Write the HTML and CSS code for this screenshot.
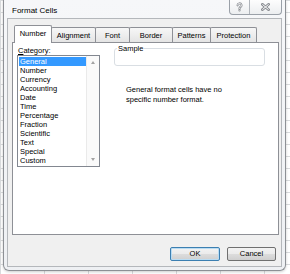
FILE: index.html
```html
<!DOCTYPE html>
<html lang="en">
<head>
    <meta charset="UTF-8">
    <meta name="viewport" content="width=device-width, initial-scale=1.0">
    <title>Format Cells</title>
    <link rel="stylesheet" href="styles.css">
</head>
<body>
    <div class="window">
        <div class="titlebar">
            <span class="title">Format Cells</span>
            <div class="caption-btns">
                <span class="cap help">
                    <svg width="7" height="10" viewBox="0 0 8 11">
                        <path d="M1.8 3.6 a2.2 2.2 0 1 1 3.3 1.9 q-1.1 0.7 -1.1 1.8 v0.5" fill="none" stroke="#8a8d92" stroke-width="2.4" stroke-linecap="round"/>
                        <circle cx="4" cy="9.4" r="1.2" fill="#8a8d92"/>
                        <path d="M1.8 3.6 a2.2 2.2 0 1 1 3.3 1.9 q-1.1 0.7 -1.1 1.8 v0.5" fill="none" stroke="#fff" stroke-width="0.9"/>
                        <circle cx="4" cy="9.4" r="0.5" fill="#fff"/>
                    </svg>
                </span>
                <span class="cap close">
                    <svg width="9" height="8" viewBox="0 0 10 9">
                        <path d="M1.5 1.5 L8.5 7.5 M8.5 1.5 L1.5 7.5" stroke="#8a8d92" stroke-width="3" stroke-linecap="square"/>
                        <path d="M1.5 1.5 L8.5 7.5 M8.5 1.5 L1.5 7.5" stroke="#fff" stroke-width="1.1"/>
                    </svg>
                </span>
            </div>
        </div>

        <div class="client">
            <!-- tab strip, first tab is the active one -->
            <div class="tabs">
                <span class="tab active">Number</span>
                <span class="tab">Alignment</span>
                <span class="tab">Font</span>
                <span class="tab">Border</span>
                <span class="tab">Patterns</span>
                <span class="tab">Protection</span>
            </div>

            <div class="panel">
                <div class="category">
                    <div class="field-label"><u>C</u>ategory:</div>
                    <div class="listbox">
                        <ul class="items">
                            <li class="selected">General</li>
                            <li>Number</li>
                            <li>Currency</li>
                            <li>Accounting</li>
                            <li>Date</li>
                            <li>Time</li>
                            <li>Percentage</li>
                            <li>Fraction</li>
                            <li>Scientific</li>
                            <li>Text</li>
                            <li>Special</li>
                            <li>Custom</li>
                        </ul>
                        <div class="scrollbar">
                            <span class="arrow up"></span>
                            <span class="arrow down"></span>
                        </div>
                    </div>
                </div>

                <div class="details">
                    <fieldset class="sample">
                        <legend>Sample</legend>
                    </fieldset>
                    <p class="desc">General format cells have no<br>specific number format.</p>
                </div>
            </div>

            <div class="buttons">
                <button class="btn default">OK</button>
                <button class="btn">Cancel</button>
            </div>
        </div>
    </div>
</body>
</html>
```

FILE: styles.css
```css
    *, *::before, *::after {
    box-sizing: border-box;
    }

    html, body {
    height: 100%;
    }

    /* the spreadsheet grid peeking out behind the dialog */
    body {
    margin: 0;
    background-color: #fff;
    background-image:
        linear-gradient(to right, #d9dbdd 1px, transparent 1px),
        linear-gradient(to bottom, #d9dbdd 1px, transparent 1px);
    background-size: 44px 100%, 100% 12px;
    font: 7.5px/9px 'Liberation Sans', Arial, sans-serif;
    color: #000;
    overflow: hidden;
    }

    .window {
    display: flex;
    flex-direction: column;
    width: 283px;
    height: 271px;
    margin-left: 3px;
    padding: 0 3px 3px;
    border: 1px solid #8d9095;
    border-top: none;
    border-radius: 0 0 6px 6px;
    background: linear-gradient(#f6f7f9, #eef0f3);
    box-shadow: 0 1px 3px #0003;
    }

    .titlebar {
    display: flex;
    justify-content: space-between;
    align-items: flex-start;
    height: 18px;
    }

    .title {
    margin: 6px 0 0 5px;
    font-size: 8px;
    line-height: 10px;
    }

    .caption-btns {
    display: flex;
    border: 1px solid #9aa0a8;
    border-top: none;
    border-radius: 0 0 4px 4px;
    background: linear-gradient(#fdfdfd, #eceef0);
    overflow: hidden;
    }

    .cap {
    display: flex;
    align-items: center;
    justify-content: center;
    height: 14px;
    }

    .help {
    width: 20px;
    border-right: 1px solid #b0b5bb;
    }

    .close {
    width: 31px;
    }

    .client {
    display: flex;
    flex-direction: column;
    flex: 1;
    padding: 6px 2px 5px 4px;
    border: 1px solid #b4b7bb;
    background-color: #f0f0f0;
    }

    .tabs {
    display: flex;
    align-items: flex-end;
    height: 17px;
    padding-left: 2px;
    }

    .tab {
    display: flex;
    align-items: center;
    justify-content: center;
    height: 15px;
    margin-left: -1px;
    border: 1px solid #8e9096;
    border-bottom: none;
    border-radius: 2px 2px 0 0;
    background: linear-gradient(#f7f7f7, #e4e4e4);
    }

    /* tab widths as Windows sizes them */
    .tab:nth-child(1) { width: 38px; margin-left: 0; }
    .tab:nth-child(2) { width: 45px; }
    .tab:nth-child(3) { width: 35px; }
    .tab:nth-child(4) { width: 44px; }
    .tab:nth-child(5) { width: 39px; }
    .tab:nth-child(6) { width: 47px; }

    .tab.active {
    position: relative;
    z-index: 1;
    height: 18px;
    margin-bottom: -1px;
    padding-bottom: 2px;
    background: #fff;
    }

    .panel {
    display: flex;
    height: 193px;
    padding: 3px 4px;
    border: 1px solid #8e9096;
    background-color: #fff;
    }

    .field-label {
    padding-left: 1px;
    }

    .field-label u {
    text-underline-offset: 1px;
    }

    .listbox {
    display: flex;
    width: 83px;
    height: 112px;
    border: 1px solid #828790;
    }

    .items {
    flex: 1;
    margin: 0;
    padding: 1px 0 0 1px;
    list-style: none;
    }

    .items li {
    height: 9px;
    padding-left: 1px;
    line-height: 9px;
    white-space: nowrap;
    }

    .items .selected {
    background-color: #3399ff;
    color: #fff;
    }

    /* disabled scrollbar, all items fit */
    .scrollbar {
    display: flex;
    flex-direction: column;
    justify-content: space-between;
    align-items: center;
    width: 13px;
    padding: 5px 0;
    border-left: 1px solid #eaeaea;
    background-color: #fafafa;
    }

    .arrow {
    width: 0;
    height: 0;
    border-left: 2.5px solid transparent;
    border-right: 2.5px solid transparent;
    }

    .arrow.up {
    border-bottom: 3px solid #a3a3a3;
    }

    .arrow.down {
    border-top: 3px solid #a3a3a3;
    }

    .details {
    flex: 1;
    margin: -2px 9px 0 14px;
    }

    .sample {
    height: 22px;
    margin: 0;
    padding: 0;
    border: 1px solid #d9dee3;
    border-radius: 3px;
    }

    .sample legend {
    margin-left: 2px;
    padding: 0 1px;
    line-height: 9px;
    }

    .desc {
    margin: 19px 0 0 12px;
    line-height: 10px;
    }

    .buttons {
    display: flex;
    justify-content: flex-end;
    gap: 7px;
    margin: 12px 3px 0 0;
    }

    .btn {
    width: 50px;
    height: 14px;
    padding: 0;
    border: 1px solid #707070;
    border-radius: 2px;
    background: linear-gradient(#f3f3f3 0%, #ebebeb 49%, #dddddd 50%, #cfcfcf 100%);
    font: 7.5px/12px 'Liberation Sans', Arial, sans-serif;
    color: #000;
    }

    .btn.default {
    border-color: #3c7fb1;
    box-shadow: inset 0 0 0 1px #b9dcf3;
    }

    .btn + .btn {
    width: 49px;
    }
```
